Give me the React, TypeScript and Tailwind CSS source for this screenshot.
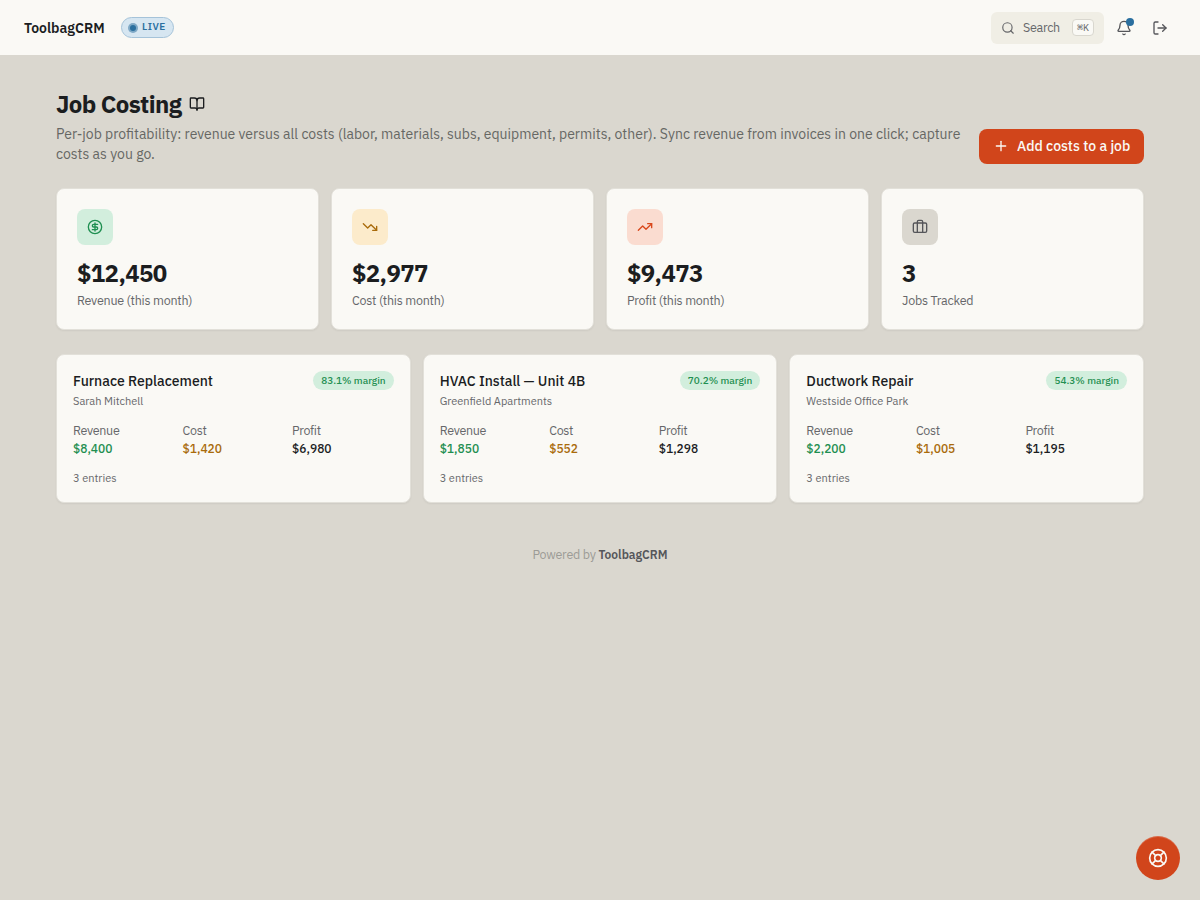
import {
  Bell,
  BookOpen,
  CircleDollarSign,
  LifeBuoy,
  LogOut,
  Plus,
  Search,
  TrendingDown,
  TrendingUp,
} from 'lucide-react'

const stats = [
  { id: 'revenue', value: '$12,450', label: 'Revenue (this month)', icon: CircleDollarSign, tile: 'bg-[#d2eedd] text-[#1f8f51]' },
  { id: 'cost', value: '$2,977', label: 'Cost (this month)', icon: TrendingDown, tile: 'bg-[#fcebcb] text-[#a96b0b]' },
  { id: 'profit', value: '$9,473', label: 'Profit (this month)', icon: TrendingUp, tile: 'bg-[#fadcd0] text-[#d9481c]' },
  { id: 'jobs', value: '3', label: 'Jobs Tracked', icon: SuitcaseIcon, tile: 'bg-[#dad7cf] text-[#55565a]' },
]

const jobs = [
  { id: 1, name: 'Furnace Replacement', customer: 'Sarah Mitchell', margin: '83.1% margin', revenue: '$8,400', cost: '$1,420', profit: '$6,980' },
  { id: 2, name: 'HVAC Install — Unit 4B', customer: 'Greenfield Apartments', margin: '70.2% margin', revenue: '$1,850', cost: '$552', profit: '$1,298' },
  { id: 3, name: 'Ductwork Repair', customer: 'Westside Office Park', margin: '54.3% margin', revenue: '$2,200', cost: '$1,005', profit: '$1,195' },
]

function SuitcaseIcon({ className, strokeWidth = 2 }: { className?: string; strokeWidth?: number }) {
  return (
    <svg
      className={className}
      viewBox="0 0 24 24"
      fill="none"
      stroke="currentColor"
      strokeWidth={strokeWidth}
      strokeLinecap="round"
      strokeLinejoin="round"
    >
      <path d="M16 20V4a2 2 0 0 0-2-2h-4a2 2 0 0 0-2 2v16" />
      <rect x="2" y="6" width="20" height="14" rx="2" />
    </svg>
  )
}

function Header() {
  return (
    <header className="h-[55px] bg-[#faf9f5] px-6 flex items-center justify-between">
      <div className="flex items-center gap-4">
        <span className="w-[81px] text-sm font-semibold whitespace-nowrap">ToolbagCRM</span>
        <span className="h-[21px] w-[53px] pl-1.5 flex items-center gap-1 rounded-full border border-[#a5c3d9] bg-[#d6e6f1] text-[#2a6f9f]">
          <span className="w-2.5 h-2.5 rounded-full bg-[#7fa9c6] flex items-center justify-center">
            <span className="w-1.5 h-1.5 rounded-full bg-[#2a6f9f]" />
          </span>
          <span className="pb-0.5 text-[10px] leading-[17px] font-semibold tracking-[0.5px]">LIVE</span>
        </span>
      </div>

      <div className="flex items-center">
        <button className="w-[113px] h-8 pl-2.5 pr-2.5 flex items-center rounded-md bg-[#f0eee5] text-[#66676a]">
          <Search className="w-3.5 h-3.5" strokeWidth={2} />
          <span className="ml-2 pb-0.5 text-[12.5px] leading-4 tracking-[-0.3px]">Search</span>
          <kbd className="ml-auto w-[22px] h-[17px] flex items-center justify-center rounded border border-[#d9d7cf] bg-[#faf9f5] font-['IBM_Plex_Mono','Liberation_Mono',monospace] text-[10px] leading-[15px]">
            ⌘K
          </kbd>
        </button>
        <button className="relative ml-1 w-8 h-8 flex items-center justify-center text-[#55565a]">
          <Bell className="w-4 h-4" strokeWidth={2} />
          <span className="absolute top-1.5 right-1.5 w-2 h-2 rounded-full bg-[#2a6f9f]" />
        </button>
        <button className="ml-1 w-8 h-8 flex items-center justify-center text-[#55565a]">
          <LogOut className="w-4 h-4" strokeWidth={2} />
        </button>
      </div>
    </header>
  )
}

export default function App() {
  return (
    <div className="min-h-screen bg-[#dad7cf] text-[#1b1d1f] font-['IBM_Plex_Sans','Roboto',sans-serif] antialiased">
      <Header />

      <main className="px-14 pt-[33px]">
        {/* Page heading */}
        <div className="flex items-end justify-between">
          <div className="w-[911px]">
            <h1 className="flex items-center gap-2 text-2xl leading-8 font-bold tracking-tight whitespace-nowrap">
              Job Costing
              <BookOpen className="w-4 h-4" strokeWidth={2} />
            </h1>
            <p className="mt-1 text-sm leading-5 text-[#666764]">
              Per-job profitability: revenue versus all costs (labor, materials, subs, equipment, permits, other). Sync revenue from invoices in one click; capture costs as you go.
            </p>
          </div>
          <button className="w-[165px] h-[35px] pl-3.5 pb-px flex items-center gap-2 rounded-lg bg-[#d1451b] text-[#faf9f5] text-sm font-medium whitespace-nowrap">
            <Plus className="w-4 h-4" strokeWidth={2} />
            Add costs to a job
          </button>
        </div>

        {/* Monthly totals */}
        <div className="mt-6 grid grid-cols-4 gap-3">
          {stats.map(({ id, value, label, icon: Icon, tile }) => (
            <div key={id} className="h-[142px] p-5 rounded-lg border border-[#e2e0d9] bg-[#faf9f5] shadow-[0_1px_2px_rgba(0,0,0,0.06)]">
              <div className={`w-9 h-9 rounded-lg flex items-center justify-center ${tile}`}>
                <Icon className="w-4 h-4" strokeWidth={2} />
              </div>
              <div className="mt-3 text-2xl leading-8 font-bold tracking-tight">{value}</div>
              <div className="mt-[3px] text-[12.5px] leading-4 tracking-[-0.24px] text-[#66676a]">{label}</div>
            </div>
          ))}
        </div>

        {/* Jobs */}
        <div className="mt-6 grid grid-cols-3 gap-3">
          {jobs.map((job) => (
            <div key={job.id} className="h-[149px] p-4 rounded-lg border border-[#e2e0d9] bg-[#faf9f5] shadow-[0_1px_2px_rgba(0,0,0,0.06)]">
              <div className="flex items-start justify-between">
                <div>
                  <div className="text-sm leading-5 font-medium">{job.name}</div>
                  <div className="mt-0.5 text-[11px] leading-4 text-[#66676a]">{job.customer}</div>
                </div>
                <span className="h-[19px] px-2 rounded-full bg-[#d2eedd] text-[#1f8f51] text-[10px] leading-[19px] font-medium">
                  {job.margin}
                </span>
              </div>
              <div className="mt-3 grid grid-cols-3 gap-2 text-xs leading-[18px]">
                <div>
                  <div className="mb-px text-[12.5px] tracking-[-0.3px] text-[#66676a]">Revenue</div>
                  <div className="font-medium text-[#1f8f51]">{job.revenue}</div>
                </div>
                <div>
                  <div className="mb-px text-[12.5px] tracking-[-0.3px] text-[#66676a]">Cost</div>
                  <div className="font-medium text-[#a96b0b]">{job.cost}</div>
                </div>
                <div>
                  <div className="mb-px text-[12.5px] tracking-[-0.3px] text-[#66676a]">Profit</div>
                  <div className="font-medium">{job.profit}</div>
                </div>
              </div>
              <div className="mt-3 text-[11px] leading-4 text-[#66676a]">3 entries</div>
            </div>
          ))}
        </div>
      </main>

      <footer className="mt-[43px] text-center text-xs leading-4 text-[#9c9b96]">
        <span className="text-[12.5px] tracking-[-0.24px]">Powered by </span>
        <span className="font-semibold text-[#55565a]">ToolbagCRM</span>
      </footer>

      {/* Help */}
      <button className="fixed right-5 bottom-5 w-11 h-11 rounded-full bg-[#d1451b] text-[#faf9f5] flex items-center justify-center shadow-[inset_0_1px_0_rgba(255,255,255,0.2)]">
        <LifeBuoy className="w-5 h-5" strokeWidth={2} />
      </button>
    </div>
  )
}
